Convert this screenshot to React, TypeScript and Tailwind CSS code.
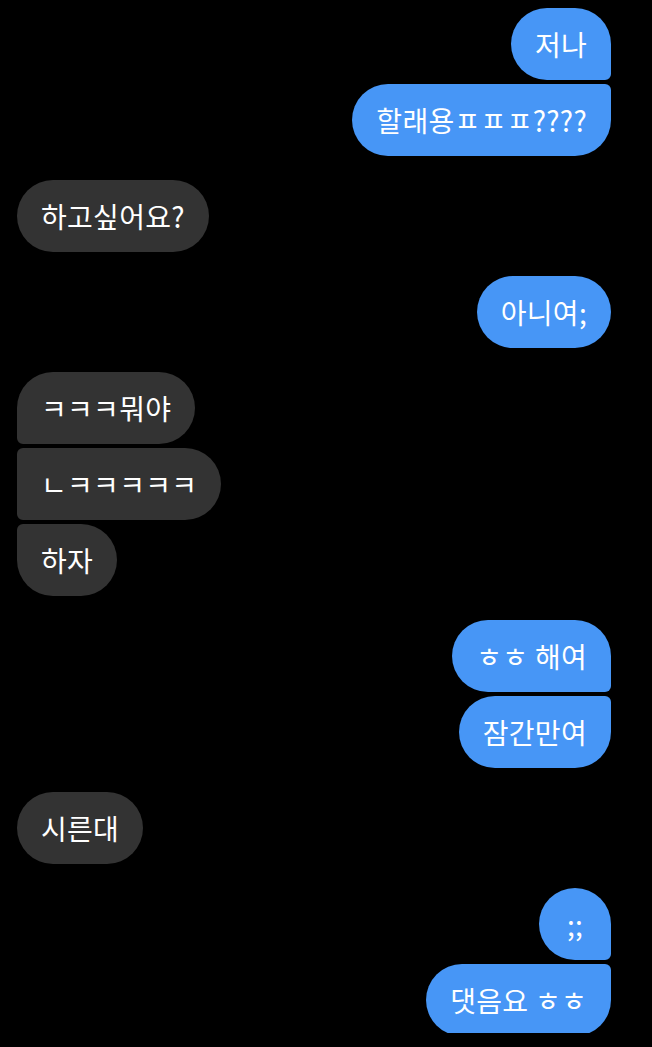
import type { ReactNode } from "react";

type Side = "me" | "them";

// corner shape per position inside a group
const meCorners = {
  single: "rounded-[36px]",
  first: "rounded-[36px] rounded-br-[6px]",
  middle: "rounded-[36px] rounded-r-[6px]",
  last: "rounded-[36px] rounded-tr-[6px]",
};

const themCorners = {
  single: "rounded-[36px]",
  first: "rounded-[36px] rounded-bl-[6px]",
  middle: "rounded-[36px] rounded-l-[6px]",
  last: "rounded-[36px] rounded-tl-[6px]",
};

type Pos = keyof typeof meCorners;

function Bubble({ side, pos, children }: { side: Side; pos: Pos; children: ReactNode }) {
  const corners = side === "me" ? meCorners[pos] : themCorners[pos];
  const color = side === "me" ? "bg-[#4796f6] self-end" : "bg-[#333333] self-start";
  return (
    <div
      className={`flex h-[72px] min-w-[72px] shrink-0 items-center justify-center px-6 text-[28px] leading-none tracking-[0.3px] text-white ${color} ${corners}`}
    >
      {children}
    </div>
  );
}

const groups: { side: Side; texts: string[] }[] = [
  { side: "me", texts: ["저나", "할래용ㅍㅍㅍ????"] },
  { side: "them", texts: ["하고싶어요?"] },
  { side: "me", texts: ["아니여;"] },
  { side: "them", texts: ["ㅋㅋㅋ뭐야", "ㄴㅋㅋㅋㅋㅋ", "하자"] },
  { side: "me", texts: ["ㅎㅎ 해여", "잠간만여"] },
  { side: "them", texts: ["시른대"] },
  { side: "me", texts: [";;", "댓음요 ㅎㅎ"] },
];

function posOf(i: number, n: number): Pos {
  if (n === 1) return "single";
  if (i === 0) return "first";
  if (i === n - 1) return "last";
  return "middle";
}

export default function App() {
  return (
    <div
      className="h-[1047px] w-[652px] overflow-hidden bg-black"
      style={{ fontFamily: '"Noto Sans CJK KR", "Noto Sans", sans-serif' }}
    >
      <div className="flex h-[1033px] flex-col gap-6 overflow-hidden pl-[17px] pr-[41px] pt-2">
        {groups.map((g, gi) => (
          <div key={gi} className="flex flex-col gap-1">
            {g.texts.map((t, i) => (
              <Bubble key={i} side={g.side} pos={posOf(i, g.texts.length)}>
                {t}
              </Bubble>
            ))}
          </div>
        ))}
      </div>
    </div>
  );
}
